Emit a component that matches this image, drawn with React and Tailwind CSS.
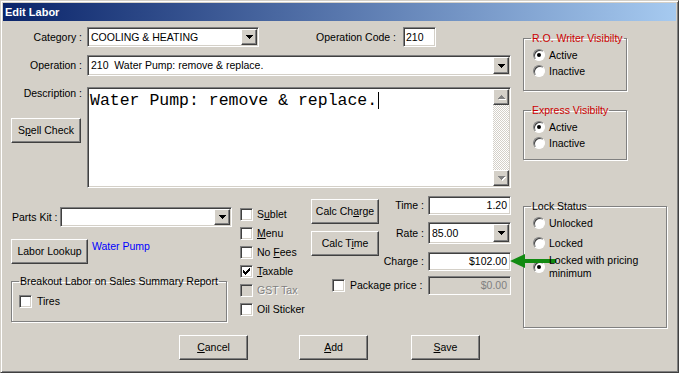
import React from "react";

const sunken =
  "border border-t-[#808080] border-l-[#808080] border-b-white border-r-white shadow-[inset_1px_1px_0_#404040,inset_-1px_-1px_0_#d4d0c8]";
const raised =
  "border border-t-white border-l-white border-b-[#404040] border-r-[#404040] shadow-[inset_-1px_-1px_0_#808080] bg-[#d4d0c8]";
const etched =
  "border border-[#808080] shadow-[inset_1px_1px_0_#fff,1px_1px_0_#fff]";

function Tri({ color = "#000", up = false }) {
  return (
    <svg width="7" height="4" viewBox="0 0 7 4" shapeRendering="crispEdges" className={up ? "rotate-180" : ""}>
      <rect x="0" y="0" width="7" height="1" fill={color} />
      <rect x="1" y="1" width="5" height="1" fill={color} />
      <rect x="2" y="2" width="3" height="1" fill={color} />
      <rect x="3" y="3" width="1" height="1" fill={color} />
    </svg>
  );
}

function DropBtn() {
  return (
    <div className={raised + " w-[16px] h-full flex items-center justify-center shrink-0"}>
      <Tri />
    </div>
  );
}

function Combo({ className, children }) {
  return (
    <div className={sunken + " bg-white p-[1px] flex items-stretch " + className}>
      <div className="flex-1 flex items-center pl-[2px] whitespace-pre overflow-hidden">{children}</div>
      <DropBtn />
    </div>
  );
}

function Btn({ className, children }) {
  return <div className={raised + " flex items-center justify-center " + className}>{children}</div>;
}

function Check({ checked, disabled }) {
  return (
    <div
      className={
        sunken +
        (disabled ? " bg-[#d4d0c8]" : " bg-white") +
        " w-[13px] h-[13px] shrink-0 flex items-center justify-center"
      }
    >
      {checked && (
        <svg width="7" height="7" viewBox="0 0 7 7" shapeRendering="crispEdges">
          <rect x="0" y="2" width="1" height="3" fill="#000" />
          <rect x="1" y="3" width="1" height="3" fill="#000" />
          <rect x="2" y="4" width="1" height="3" fill="#000" />
          <rect x="3" y="3" width="1" height="3" fill="#000" />
          <rect x="4" y="2" width="1" height="3" fill="#000" />
          <rect x="5" y="1" width="1" height="3" fill="#000" />
          <rect x="6" y="0" width="1" height="3" fill="#000" />
        </svg>
      )}
    </div>
  );
}

function Radio({ checked }) {
  return (
    <div className="w-[12px] h-[12px] shrink-0 rounded-full bg-white border border-t-[#808080] border-l-[#808080] border-b-white border-r-white shadow-[inset_1px_1px_0_#404040] flex items-center justify-center">
      {checked && <div className="w-[4px] h-[4px] rounded-full bg-black" />}
    </div>
  );
}

function RadioRow({ checked, children, className = "" }) {
  return (
    <div className={"flex items-center pl-[9px] " + className}>
      <Radio checked={checked} />
      <span className="ml-[4px] relative z-10">{children}</span>
    </div>
  );
}

function CheckRow({ checked, disabled, children }) {
  return (
    <div className="flex items-center h-[19px]">
      <Check checked={checked} disabled={disabled} />
      <span className={"ml-[4px] " + (disabled ? "text-[#808080] [text-shadow:1px_1px_0_#fff]" : "")}>{children}</span>
    </div>
  );
}

export default function App() {
  return (
    <div className="w-[679px] h-[373px] bg-[#d4d0c8] border border-t-[#d4d0c8] border-l-[#d4d0c8] border-r-[#404040] border-b-[#404040] shadow-[inset_1px_1px_0_#fff,inset_-1px_-1px_0_#808080] p-[2px] font-['Liberation_Sans',Arial,sans-serif] text-[10.5px] leading-[13px] text-black overflow-hidden">
      <div className="h-[18px] bg-[linear-gradient(to_right,#0a246a,#a6caf0)] flex items-center pl-[2px] text-white font-bold text-[11px]">
        Edit Labor
      </div>
      <div className="relative">
        <div className="flex h-[309px]">
          {/* Left area */}
          <div className="w-[520px] shrink-0 flex flex-col">
            <div className="flex mt-[6px] h-[20px]">
              <div className="w-[84px] pr-[5px] text-right self-center">Category :</div>
              <Combo className="w-[172px] h-[20px]">COOLING &amp; HEATING</Combo>
              <div className="w-[144px] text-right pr-[7px] self-center">Operation Code :</div>
              <div className={sunken + " bg-white w-[33px] h-[20px] pl-[2px] flex items-center"}>210</div>
            </div>
            <div className="flex mt-[8px] h-[21px]">
              <div className="w-[84px] pr-[5px] text-right self-center">Operation :</div>
              <Combo className="w-[424px] h-[21px]">210  Water Pump: remove &amp; replace.</Combo>
            </div>
            <div className="flex mt-[11px] h-[101px]">
              <div className="w-[84px] flex flex-col">
                <div className="pr-[5px] text-right">Description :</div>
                <Btn className="ml-[8px] mt-[18px] w-[70px] h-[25px]">
                  <span>
                    S<span className="underline">p</span>ell Check
                  </span>
                </Btn>
              </div>
              <div className={sunken + " bg-white w-[424px] h-full p-[1px] flex"}>
                <div className="flex-1 pl-[1px] pt-[2px] font-['Liberation_Mono',monospace] text-[16.5px] leading-[19px] whitespace-pre">
                  Water Pump: remove &amp; replace.
                  <span className="inline-block w-[1px] h-[17px] bg-black align-middle ml-[1px]" />
                </div>
                <div className="w-[16px] flex flex-col">
                  <div className={raised + " h-[16px] flex items-center justify-center"}>
                    <div className="[filter:drop-shadow(1px_1px_0_#fff)]">
                      <Tri color="#808080" up />
                    </div>
                  </div>
                  <div className="flex-1 bg-[repeating-conic-gradient(#ffffff_0_25%,#d4d0c8_0_50%)] bg-[length:2px_2px]" />
                  <div className={raised + " h-[16px] flex items-center justify-center"}>
                    <div className="[filter:drop-shadow(1px_1px_0_#fff)]">
                      <Tri color="#808080" />
                    </div>
                  </div>
                </div>
              </div>
            </div>

            {/* Bottom part */}
            <div className="flex mt-[8px]">
              <div className="ml-[8px] w-[221px] flex flex-col">
                <div className="flex mt-[11px] h-[20px]">
                  <div className="w-[49px] pl-[1px] self-center">Parts Kit :</div>
                  <Combo className="w-[172px] h-[20px]"></Combo>
                </div>
                <div className="flex items-start mt-[12px]">
                  <Btn className="w-[77px] h-[25px]">Labor Lookup</Btn>
                  <span className="ml-[4px] mt-[1px] text-[#0000ff]">Water Pump</span>
                </div>
                <fieldset className={etched + " mt-[11px] w-[216px] h-[47px]"}>
                  <legend className="ml-[7px] px-[1px] leading-[13px]">Breakout Labor on Sales Summary Report</legend>
                  <div className="flex items-center pl-[7px] mt-[6px] h-[15px]">
                    <Check />
                    <span className="ml-[5px]">Tires</span>
                  </div>
                </fieldset>
              </div>

              <div className="ml-[8px] w-[71px] flex flex-col mt-[9px]">
                <CheckRow>
                  S<span className="underline">u</span>blet
                </CheckRow>
                <CheckRow>
                  <span className="underline">M</span>enu
                </CheckRow>
                <CheckRow>
                  No <span className="underline">F</span>ees
                </CheckRow>
                <CheckRow checked>
                  <span className="underline">T</span>axable
                </CheckRow>
                <CheckRow disabled>GST Tax</CheckRow>
                <CheckRow>Oil Sticker</CheckRow>
              </div>

              <div className="w-[200px] flex flex-col">
                <div className="flex">
                  <div className="w-[68px] flex flex-col">
                    <Btn className="mt-[3px] h-[25px]">
                      <span>
                        Calc Ch<span className="underline">a</span>rge
                      </span>
                    </Btn>
                    <Btn className="mt-[7px] h-[25px]">
                      <span>
                        Calc T<span className="underline">i</span>me
                      </span>
                    </Btn>
                  </div>
                  <div className="w-[132px] flex flex-col">
                    <div className="flex items-center justify-end h-[19px]">
                      <span className="mr-[4px]">Time :</span>
                      <div className={sunken + " bg-white w-[83px] h-full flex items-center justify-end pr-[3px]"}>1.20</div>
                    </div>
                    <div className="flex items-center justify-end h-[22px] mt-[7px]">
                      <span className="mr-[4px]">Rate :</span>
                      <Combo className="w-[83px] h-full">85.00</Combo>
                    </div>
                    <div className="flex items-center justify-end h-[19px] mt-[8px]">
                      <span className="mr-[4px]">Charge :</span>
                      <div className={sunken + " bg-white w-[83px] h-full flex items-center justify-end pr-[3px]"}>$102.00</div>
                    </div>
                  </div>
                </div>
                <div className="flex items-center h-[19px] mt-[5px]">
                  <div className="ml-[21px]">
                    <Check />
                  </div>
                  <span className="ml-[5px] flex-1">Package price :</span>
                  <div className={sunken + " bg-[#d4d0c8] w-[83px] h-full flex items-center justify-end pr-[3px] text-[#808080]"}>
                    $0.00
                  </div>
                </div>
              </div>
            </div>
          </div>

          {/* Right column */}
          <div className="flex flex-col">
            <fieldset className={etched + " mt-[11px] w-[104px] h-[59px]"}>
              <legend className="ml-[7px] px-[1px] leading-[13px] text-[#cc0000]">R.O. Writer Visibilty</legend>
              <RadioRow checked className="h-[16px] mt-[2px]">Active</RadioRow>
              <RadioRow className="h-[16px]">Inactive</RadioRow>
            </fieldset>
            <fieldset className={etched + " mt-[13px] w-[104px] h-[56px]"}>
              <legend className="ml-[7px] px-[1px] leading-[13px] text-[#cc0000]">Express Visibilty</legend>
              <RadioRow checked className="h-[16px] mt-[2px]">Active</RadioRow>
              <RadioRow className="h-[16px]">Inactive</RadioRow>
            </fieldset>
            <fieldset className={etched + " mt-[40px] w-[144px] h-[128px]"}>
              <legend className="ml-[7px] px-[1px] leading-[13px]">Lock Status</legend>
              <RadioRow className="h-[16px] mt-[2px]">Unlocked</RadioRow>
              <RadioRow className="h-[16px] mt-[4px]">Locked</RadioRow>
              <RadioRow checked className="h-[26px] mt-[3px]">
                Locked with pricing
                <br />
                minimum
              </RadioRow>
            </fieldset>
          </div>
        </div>

        {/* Bottom buttons */}
        <div className="flex mt-[5px]">
          <Btn className="ml-[176px] w-[69px] h-[25px]">
            <span>
              <span className="underline">C</span>ancel
            </span>
          </Btn>
          <Btn className="ml-[51px] w-[69px] h-[25px]">
            <span>
              <span className="underline">A</span>dd
            </span>
          </Btn>
          <Btn className="ml-[43px] w-[69px] h-[25px]">
            <span>
              <span className="underline">S</span>ave
            </span>
          </Btn>
        </div>

        {/* Green arrow overlay */}
        <svg className="absolute left-[507px] top-[233px]" width="46" height="14" viewBox="0 0 46 14">
          <polygon points="0,7 15,0 15,14" fill="#118a11" />
          <rect x="14" y="5" width="32" height="4" fill="#118a11" />
        </svg>
      </div>
    </div>
  );
}
